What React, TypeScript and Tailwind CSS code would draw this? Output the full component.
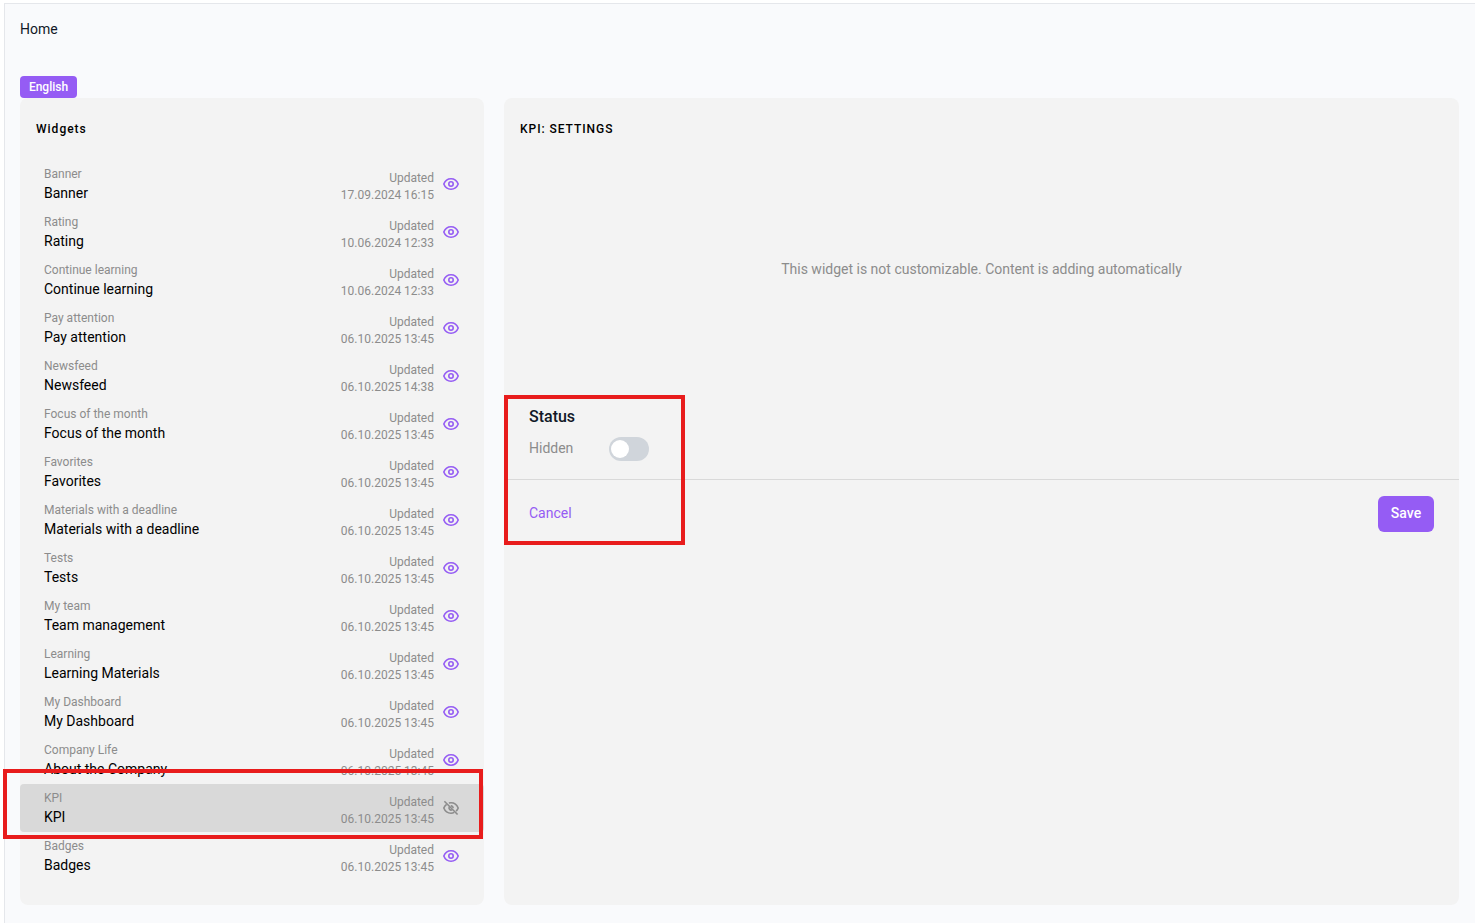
import { useState } from "react"
import clsx from "clsx"

type Widget = {
    id: number,
    type: string,
    title: string,
    updated: string,
    hidden?: boolean
}

const widgets: Widget[] = [
    { id: 1, type: "Banner", title: "Banner", updated: "17.09.2024 16:15" },
    { id: 2, type: "Rating", title: "Rating", updated: "10.06.2024 12:33" },
    { id: 3, type: "Continue learning", title: "Continue learning", updated: "10.06.2024 12:33" },
    { id: 4, type: "Pay attention", title: "Pay attention", updated: "06.10.2025 13:45" },
    { id: 5, type: "Newsfeed", title: "Newsfeed", updated: "06.10.2025 14:38" },
    { id: 6, type: "Focus of the month", title: "Focus of the month", updated: "06.10.2025 13:45" },
    { id: 7, type: "Favorites", title: "Favorites", updated: "06.10.2025 13:45" },
    { id: 8, type: "Materials with a deadline", title: "Materials with a deadline", updated: "06.10.2025 13:45" },
    { id: 9, type: "Tests", title: "Tests", updated: "06.10.2025 13:45" },
    { id: 10, type: "My team", title: "Team management", updated: "06.10.2025 13:45" },
    { id: 11, type: "Learning", title: "Learning Materials", updated: "06.10.2025 13:45" },
    { id: 12, type: "My Dashboard", title: "My Dashboard", updated: "06.10.2025 13:45" },
    { id: 13, type: "Company Life", title: "About the Company", updated: "06.10.2025 13:45" },
    { id: 14, type: "KPI", title: "KPI", updated: "06.10.2025 13:45", hidden: true },
    { id: 15, type: "Badges", title: "Badges", updated: "06.10.2025 13:45" },
]

function EyeIcon() {
    return (
        <svg width="16" height="16" viewBox="0 0 16 16" fill="none" stroke="currentColor" strokeWidth="1.6">
            <path d="M.8 8C2.1 4.700 4.900 2.800 8 2.800s5.900 1.900 7.200 5.200c-1.300 3.300-4.100 5.200-7.200 5.200S2.100 11.300.8 8Z" strokeLinejoin="round" />
            <circle cx="8" cy="8" r="2.2" />
        </svg>
    )
}

function EyeOffIcon() {
    return (
        <svg width="16" height="16" viewBox="0 0 16 16" fill="none" stroke="currentColor" strokeWidth="1.6">
            <path d="M3.600 4.300C2.400 5.200 1.400 6.400.8 8c1.300 3.300 4.100 5.200 7.200 5.200 1.200 0 2.300-.3 3.300-.8M5.900 3.100C6.600 2.900 7.300 2.800 8 2.800c3.100 0 5.900 1.900 7.200 5.200-.5 1.300-1.200 2.300-2.100 3.100" />
            <path d="M6.300 6.900a2.100 2.100 0 0 0 2.800 2.900M7.800 5.900A2.100 2.100 0 0 1 10.100 8.200" />
            <path d="m1.400 1.200 13.200 13.300" />
        </svg>
    )
}

function WidgetRow({ widget, active, onClick }: { widget: Widget, active: boolean, onClick: () => void }) {
    return (
        <li onClick={onClick}
            className={clsx("flex h-12 cursor-pointer items-center rounded-sm pr-[25px] pl-6", active && "bg-[#d9d9d9]")}>
            <div className="flex-1">
                <p className="text-xs leading-[18px] text-[#8c8c8c]">{widget.type}</p>
                <p className="text-sm leading-5 text-black">{widget.title}</p>
            </div>
            <div className="mt-1.5 mr-[9px] text-right text-xs leading-[17px] text-[#8c8c8c]">
                <p>Updated</p>
                <p>{widget.updated}</p>
            </div>
            <span className={widget.hidden ? "text-[#8c8c8c]" : "text-[#955cf4]"}>
                {widget.hidden ? <EyeOffIcon /> : <EyeIcon />}
            </span>
        </li>
    )
}

export default function App() {
    const [selectedId, setSelectedId] = useState<number>(14)
    const [visible, setVisible] = useState<boolean>(false)

    return (
        <div className="h-[923px] overflow-hidden bg-white pt-[3px] pl-1 font-['Roboto',sans-serif]">
            <div className="h-[920px] border-t border-l border-[#e5e7eb] bg-[#f9fafc] pr-4 pl-[15px]">
                <h1 className="pt-[15px] text-sm leading-5 text-[#111827]">Home</h1>
                <button className="mt-[37px] block h-[22px] w-[57px] rounded bg-[#955cf4] text-xs font-medium text-white">English</button>
                <div className="flex h-[807px] gap-5">
                    <div className="relative w-[464px] rounded-lg bg-[#f3f3f3]">
                        <h2 className="px-4 pt-[21px] text-xs leading-5 font-medium tracking-[1px] text-black">Widgets</h2>
                        <ul className="mt-[21px]">
                            {widgets.map((widget) => (
                                <WidgetRow key={widget.id} widget={widget} active={widget.id === selectedId}
                                    onClick={() => setSelectedId(widget.id)} />
                            ))}
                        </ul>
                        <div className="pointer-events-none absolute top-[671px] -left-[17px] h-[70px] w-[480px] border-4 border-[#e81c1c]" />
                    </div>
                    <div className="relative flex-1 rounded-lg bg-[#f3f3f3]">
                        <h2 className="px-4 pt-[21px] text-xs leading-5 font-medium tracking-[0.95px] text-black">KPI: SETTINGS</h2>
                        <p className="mt-[120px] text-center text-sm leading-5 text-[#8c8c8c]">
                            This widget is not customizable. Content is adding automatically
                        </p>
                        <div className="mt-[126px] border-b border-[#d9d9d9] pb-[18px] pl-[25px]">
                            <h3 className="text-base leading-6 font-medium text-[#111827]">Status</h3>
                            <div className="mt-2 flex h-6 items-center">
                                <span className="w-20 pb-0.5 text-sm text-[#8c8c8c]">{visible ? "Visible" : "Hidden"}</span>
                                <button onClick={() => setVisible(!visible)}
                                    className={clsx("flex h-6 w-10 items-center rounded-full px-0.5", visible ? "justify-end bg-[#955cf4]" : "bg-[#d0d5db]")}>
                                    <span className="size-[18px] rounded-full bg-white" />
                                </button>
                            </div>
                        </div>
                        <div className="flex items-start justify-between pt-4 pr-[25px] pl-[25px]">
                            <button className="pt-[7px] text-sm leading-5 text-[#955cf4]">Cancel</button>
                            <button className="h-9 w-14 rounded-md bg-[#955cf4] pb-0.5 text-sm font-medium text-white">Save</button>
                        </div>
                        <div className="pointer-events-none absolute top-[297px] left-0 h-[150px] w-[181px] border-4 border-[#e81c1c]" />
                    </div>
                </div>
            </div>
        </div>
    )
}
